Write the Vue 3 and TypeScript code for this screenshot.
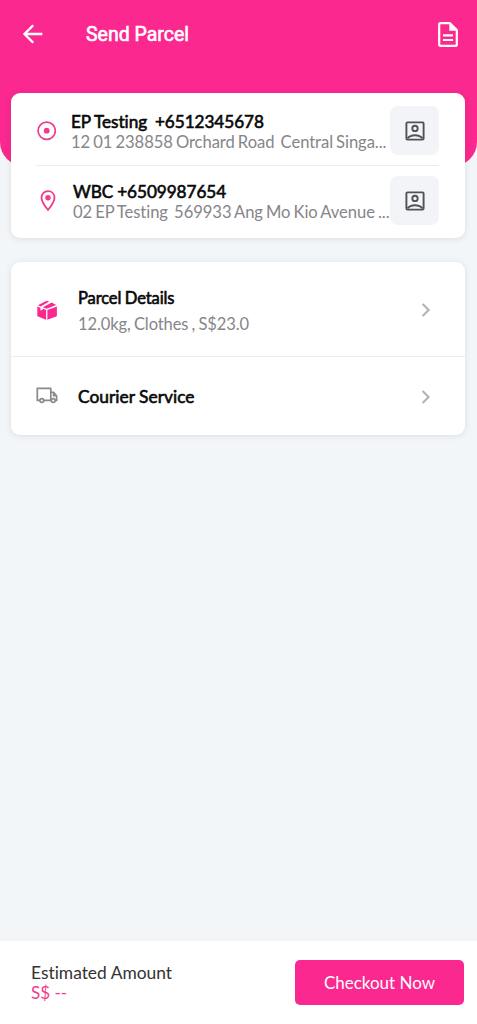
<script setup lang="ts">
interface Stop {
  kind: 'origin' | 'destination'
  contact: string
  address: string
}

interface Option {
  kind: 'parcel' | 'courier'
  title: string
  summary?: string
}

const stops: Stop[] = [
  { kind: 'origin', contact: 'EP Testing  +6512345678', address: '12 01 238858 Orchard Road  Central Singa...' },
  { kind: 'destination', contact: 'WBC +6509987654', address: '02 EP Testing  569933 Ang Mo Kio Avenue ...' },
]

const options: Option[] = [
  { kind: 'parcel', title: 'Parcel Details', summary: '12.0kg, Clothes , S$23.0' },
  { kind: 'courier', title: 'Courier Service' },
]
</script>

<template>
  <div class="screen">
    <header class="header">
      <svg class="back" viewBox="0 0 24 24" width="28" height="28">
        <path d="M20 12H4.8M12.2 4.5L4.7 12l7.5 7.5" fill="none" stroke="#fff" stroke-width="2" />
      </svg>
      <h1 class="title">Send Parcel</h1>
      <svg class="orders" viewBox="0 0 20 25" width="20" height="25">
        <path d="M1.2 2.4Q1.2 1.2 2.4 1.2H12L18.8 8V22.4Q18.8 23.8 17.4 23.8H2.6Q1.2 23.8 1.2 22.4Z" fill="none" stroke="#fff" stroke-width="2.2" stroke-linejoin="round" />
        <path d="M11.3 1.5V8.7H18.6Z" fill="#fff" />
        <path d="M5 13.3H15M5 18H15" stroke="#fff" stroke-width="2.2" />
      </svg>
    </header>

    <main class="content">
      <section class="card route">
        <div v-for="stop in stops" :key="stop.kind" class="stop" :class="stop.kind">
          <svg v-if="stop.kind === 'origin'" class="marker" viewBox="0 0 20 20" width="20" height="20">
            <circle cx="10.7" cy="9.7" r="8.6" fill="none" stroke="#ee3c8e" stroke-width="1.7" />
            <circle cx="10.7" cy="9.7" r="2.9" fill="#ee3c8e" />
          </svg>
          <svg v-else class="marker" viewBox="0 0 20 22" width="20" height="22">
            <path d="M12 1.2C8.1 1.2 5.5 4 5.5 7.7C5.5 12 9.4 16.6 12 20C14.6 16.6 18.5 12 18.5 7.7C18.5 4 15.9 1.2 12 1.2Z" fill="none" stroke="#ee3c8e" stroke-width="1.8" stroke-linejoin="round" />
            <circle cx="12" cy="7.7" r="2.7" fill="#ee3c8e" />
          </svg>
          <div class="stop-text">
            <div class="contact">{{ stop.contact }}</div>
            <div class="address">{{ stop.address }}</div>
          </div>
          <button class="contacts" type="button" aria-label="Contacts">
            <svg viewBox="0 0 20 20" width="20" height="20">
              <rect x="1.4" y="1.4" width="17.2" height="17.2" rx="1" fill="none" stroke="#4f5358" stroke-width="1.9" />
              <circle cx="10" cy="7.4" r="2.7" fill="none" stroke="#4f5358" stroke-width="1.9" />
              <path d="M2.5 17.4C5.8 13.2 14.2 13.2 17.5 17.4" fill="none" stroke="#4f5358" stroke-width="1.9" />
            </svg>
          </button>
        </div>
      </section>

      <section class="card options">
        <div v-for="option in options" :key="option.kind" class="option" :class="option.kind">
          <svg v-if="option.kind === 'parcel'" class="option-icon" viewBox="0 0 22 22" width="22" height="22">
            <path d="M1.3 7.4L4.4 8.7V11.6L6.6 10.7V9.6L10.1 11V20.8L2 17.6Q1.3 17.3 1.3 16.5Z" fill="#fb288f" />
            <path d="M20.9 7.4L11.4 11V20.8L20.2 17.6Q20.9 17.3 20.9 16.5Z" fill="#fb288f" />
            <path d="M1.9 6.2L10.2 1.9Q11 1.5 11.8 1.9L13.1 2.4L4.8 7.4Z" fill="#fb288f" />
            <path d="M6.9 8.3L15.7 3.5L20.2 5.9L10.8 9.8Z" fill="#fb288f" />
          </svg>
          <svg v-else class="option-icon" viewBox="0 0 22 22" width="22" height="22">
            <g fill="none" stroke="#8a8a8a" stroke-width="1.7" stroke-linejoin="round">
              <path d="M3.6 15.4H1.3V3.4H14.8V15.4H8" />
              <path d="M14.8 7.4H17.8L20.6 11V15.4H19.4" />
              <circle cx="5.8" cy="15.6" r="1.9" />
              <circle cx="17.2" cy="15.6" r="1.9" />
            </g>
            <path d="M16.8 8.2H18L20.4 11.6H16.8Z" fill="#8a8a8a" />
          </svg>
          <div class="option-text">
            <div class="option-title">{{ option.title }}</div>
            <div v-if="option.summary" class="summary">{{ option.summary }}</div>
          </div>
          <svg class="chevron" viewBox="0 0 10 16" width="10" height="16">
            <path d="M1.6 2L7.6 8L1.6 14" fill="none" stroke="#b3b3b3" stroke-width="2.1" />
          </svg>
        </div>
      </section>
    </main>

    <footer class="footer">
      <div class="estimate">
        <div class="estimate-label">Estimated Amount</div>
        <div class="estimate-value">S$ --</div>
      </div>
      <button class="checkout" type="button">Checkout Now</button>
    </footer>
  </div>
</template>

<style>
body {
  margin: 0;
}
</style>

<style scoped>
.screen {
  display: flex;
  flex-direction: column;
  box-sizing: border-box;
  height: 1024px;
  overflow: hidden;
  background: #f3f6f9;
  font-family: Lato, "Liberation Sans", sans-serif;
  font-variant-ligatures: none;
}
button {
  padding: 0;
  border: 0;
  font-family: inherit;
}
svg {
  display: block;
  flex: none;
}
.header {
  display: flex;
  align-items: flex-start;
  box-sizing: border-box;
  flex: none;
  height: 166px;
  padding: 20px 19px 0 18.5px;
  border-radius: 0 0 24px 24px;
  background: #fb288f;
}
.title {
  flex: 1;
  margin: 3px 0 0 39.5px;
  color: #fff;
  font: 400 19.5px/24px Roboto, sans-serif;
  -webkit-text-stroke: 0.6px #fff;
}
.orders {
  margin-top: 2px;
}
.content {
  flex: 1;
  margin-top: -73px;
  padding: 0 12.5px 0 10.5px;
}
.card {
  border-radius: 9px;
  background: #fff;
  box-shadow: 0 1px 6px rgba(50, 60, 70, 0.13);
}
.route {
  box-sizing: border-box;
  height: 144.5px;
  padding: 3px 25.5px 0 25.5px;
}
.stop {
  display: flex;
  align-items: center;
  box-sizing: border-box;
  height: 69px;
}
.stop.origin {
  height: 70px;
  border-bottom: 1px solid #ececee;
}
.stop-text {
  flex: 1;
  min-width: 0;
  padding: 2px 0 0 15px;
  white-space: pre;
}
.destination .stop-text {
  padding-left: 17px;
}
.contact {
  color: #080808;
  font-size: 17.2px;
  line-height: 20px;
  letter-spacing: -0.06px;
  word-spacing: -0.4px;
  -webkit-text-stroke: 0.6px #080808;
}
.address {
  color: #85858a;
  font-size: 16.6px;
  line-height: 20px;
  letter-spacing: -0.06px;
  word-spacing: -1.1px;
}
.contacts {
  display: grid;
  place-items: center;
  flex: none;
  width: 49px;
  height: 49px;
  border-radius: 8px;
  background: #f2f4f7;
}
.options {
  margin-top: 24.5px;
}
.option {
  display: flex;
  align-items: center;
  box-sizing: border-box;
  height: 78px;
  padding: 0 33.5px 0 25.5px;
}
.option.parcel {
  height: 95px;
  padding-top: 2px;
  border-bottom: 1.5px solid #ececee;
}
.courier .chevron {
  margin-top: 1px;
}
.option-text {
  flex: 1;
  padding: 1px 0 0 20px;
}
.option-title {
  color: #080808;
  font-size: 17.4px;
  line-height: 25px;
  -webkit-text-stroke: 0.6px #080808;
}
.parcel .option-title {
  font-size: 16.6px;
  line-height: 26px;
  letter-spacing: -0.14px;
  word-spacing: -0.5px;
}
.summary {
  color: #85858a;
  font-size: 16.5px;
  line-height: 26px;
  letter-spacing: -0.08px;
  word-spacing: -1px;
}
.footer {
  display: flex;
  align-items: center;
  justify-content: space-between;
  box-sizing: border-box;
  flex: none;
  height: 83.5px;
  padding: 0 13px 0 31px;
  background: #fff;
}
.estimate {
  padding-top: 1px;
}
.estimate-label {
  color: #333;
  font-size: 17.4px;
  line-height: 20px;
}
.estimate-value {
  color: #ee3c8e;
  font-size: 17px;
  line-height: 20px;
}
.checkout {
  width: 169px;
  height: 45px;
  border-radius: 5px;
  background: #fb288f;
  color: #fff;
  font-size: 17px;
}
</style>
